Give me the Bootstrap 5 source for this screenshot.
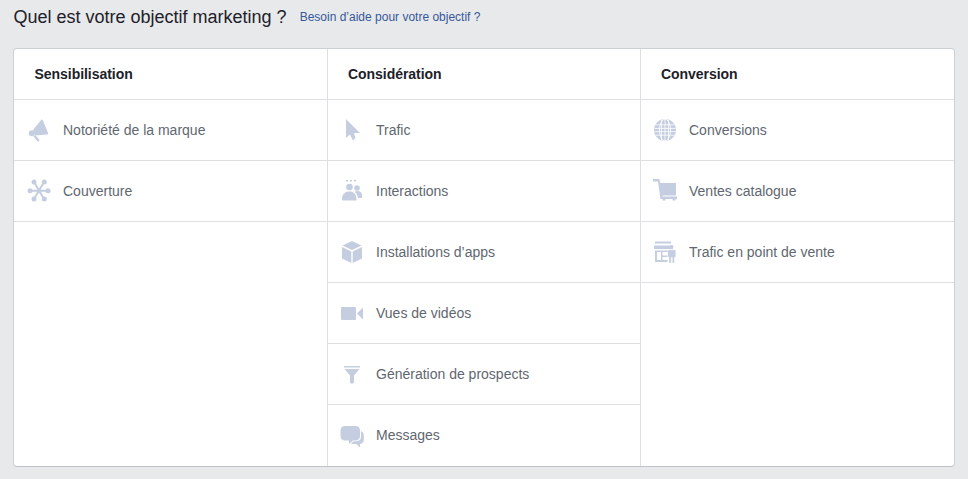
<!DOCTYPE html>
<html lang="fr">
<head>
<meta charset="utf-8">
<title>Objectif marketing</title>
<link href="https://cdn.jsdelivr.net/npm/bootstrap@5.3.0/dist/css/bootstrap.min.css" rel="stylesheet">
<style>
html,body{height:479px;overflow:hidden}
body{background:#e8e9eb;font-family:"Liberation Sans",Arial,sans-serif;color:#1d2129}
.page-wrap{padding:0 13px}
.title-row{height:48px;padding-bottom:14px}
.title-text{font-size:18px;line-height:34px;margin:0;font-weight:400;padding-left:.5px}
.help-link{font-size:12px;color:#365899;text-decoration:none;margin-left:13px}
.obj-box{width:942px;height:419px;background:#fff;border:1px solid #ccd0d5;border-bottom-color:#bec2c9;border-radius:4px;overflow:hidden}
.obj-col{width:314px;flex:none;border-right:1px solid #dddfe2}
.obj-col:nth-child(2){width:313px}
.obj-col:last-child{border-right:0;width:313px}
.obj-head{height:51px;border-bottom:1px solid #dddfe2;padding-left:20px;font-size:14px;font-weight:700;line-height:50px;color:#1d2129;letter-spacing:-.04px}
.obj-col:first-child .obj-head{padding-left:20.5px}
.obj-row{height:61px;border-bottom:1px solid #dddfe2;font-size:14px;color:#616770}
.obj-row.end{border-bottom:0}
.obj-ico{width:48px;flex:none;display:flex;justify-content:center}
.obj-col:first-child .obj-ico{width:49px;padding-right:1px}
.obj-ico svg{display:block;fill:#c5cde0;overflow:visible}
</style>
</head>
<body>
<div class="page-wrap">
  <div class="title-row d-flex align-items-center">
    <h1 class="title-text">Quel est votre objectif marketing ?</h1>
    <a class="help-link" href="#">Besoin d’aide pour votre objectif ?</a>
  </div>
  <div class="obj-box d-flex">
    <div class="obj-col">
      <div class="obj-head">Sensibilisation</div>
      <div class="obj-row d-flex align-items-center">
        <span class="obj-ico"><svg width="24" height="24" viewBox="0 0 24 24"><path d="M15.500 1.500c.7 0 1.100.4 1.400 1l5.300 12.800c.3.800-.2 1.100-1 1.100L9 17.500 7 12z"/><circle cx="5.800" cy="15.200" r="3"/><path d="M9 18.500l3.200 3.800" stroke="#c5cde0" stroke-width="2.500" stroke-linecap="round" fill="none"/></svg></span>
        <span>Notoriété de la marque</span>
      </div>
      <div class="obj-row d-flex align-items-center">
        <span class="obj-ico"><svg width="24" height="24" viewBox="0 0 24 24"><path d="M8 3 18 20M18 3 8 20M4 11.700h18" stroke="#c5cde0" stroke-width="2" fill="none"/><circle cx="13" cy="11.700" r="2.200"/><circle cx="8" cy="3" r="2.500"/><circle cx="18.300" cy="3" r="2.500"/><circle cx="8" cy="20" r="2.500"/><circle cx="18.300" cy="20" r="2.500"/><circle cx="4" cy="11.700" r="2.500"/><circle cx="22" cy="11.700" r="2.500"/></svg></span>
        <span>Couverture</span>
      </div>
    </div>
    <div class="obj-col">
      <div class="obj-head">Considération</div>
      <div class="obj-row d-flex align-items-center">
        <span class="obj-ico"><svg width="24" height="24" viewBox="0 0 24 24"><path d="M6 1 20 15h-6l1.500 5-2.700 2.500L10 16.500 6 20z"/></svg></span>
        <span>Trafic</span>
      </div>
      <div class="obj-row d-flex align-items-center">
        <span class="obj-ico"><svg width="24" height="24" viewBox="0 0 24 24"><rect x="6" y="1" width="2" height="1.500"/><rect x="10" y="1" width="2" height="1.500"/><rect x="14" y="1" width="2" height="1.500"/><circle cx="9.500" cy="8" r="3.300"/><circle cx="17" cy="9" r="2.800"/><path d="M2 20c0-5 3-7.500 7.500-7.500S16.500 15 16.500 21.500H3.500C2.500 21.500 2 21 2 20z"/><path d="M14.500 12.800c1-.5 1.800-.7 3-.7 3.200 0 4.800 2.500 4.800 5.300 0 1-.4 1.600-1.300 1.600h-3c-.4-2.600-1.400-4.800-3.500-6.200z"/></svg></span>
        <span>Interactions</span>
      </div>
      <div class="obj-row d-flex align-items-center">
        <span class="obj-ico"><svg width="24" height="24" viewBox="0 0 24 24"><path d="M12 1 21.500 5.500 12 10 2.500 5.500z"/><path d="M2 7 11.300 11.500v11.500L2 18.500z"/><path d="M22 7 12.700 11.500v11.500L22 18.500z"/></svg></span>
        <span>Installations d’apps</span>
      </div>
      <div class="obj-row d-flex align-items-center">
        <span class="obj-ico"><svg width="24" height="24" viewBox="0 0 24 24"><rect x="1" y="6" width="15" height="13" rx="1"/><path d="M17 12.500 23 6.500V18.500z"/></svg></span>
        <span>Vues de vidéos</span>
      </div>
      <div class="obj-row d-flex align-items-center">
        <span class="obj-ico"><svg width="24" height="24" viewBox="0 0 24 24"><rect x="4" y="4" width="16" height="1.500"/><path d="M4.500 7h15l-5.500 6.500v6.500c0 .8-.7 1.500-1.500 1.500h-1c-.8 0-1.500-.7-1.500-1.500v-6.500z"/></svg></span>
        <span>Génération de prospects</span>
      </div>
      <div class="obj-row end d-flex align-items-center">
        <span class="obj-ico"><svg width="24" height="24" viewBox="0 0 24 24"><path d="M5 2h10.500c2.800 0 4.500 1.800 4.500 4.500v5.500c0 2.800-1.800 4.500-4.500 4.500H13l-4 3.500v-3.500H5C2.200 16.500.5 14.800.5 12V6.500C.5 3.800 2.200 2 5 2z"/><path d="M21 7c1.800.8 2.800 2.500 2.800 4.500v4.300c0 2.400-1.500 4-3.800 4.200v3.500l-3.700-3.500h-3.500c-.8 0-1.500-.2-2-.5l3-2.300h2.700c3 0 4.500-1.800 4.500-4.700z"/></svg></span>
        <span>Messages</span>
      </div>
    </div>
    <div class="obj-col">
      <div class="obj-head">Conversion</div>
      <div class="obj-row d-flex align-items-center">
        <span class="obj-ico"><svg width="24" height="24" viewBox="0 0 24 24"><circle cx="12" cy="12" r="11"/><g fill="none" stroke="#fff" stroke-width=".8"><ellipse cx="12" cy="12" rx="5.500" ry="11"/><path d="M12 1v22M2.500 6.800h19M1.200 10.400h21.600M1.200 13.600h21.600M2.500 17.200h19M8.500 1.500v21M15.500 1.500v21"/></g></svg></span>
        <span>Conversions</span>
      </div>
      <div class="obj-row d-flex align-items-center">
        <span class="obj-ico"><svg width="24" height="24" viewBox="0 0 24 24"><path d="M0 0h6.500l.6 4H23v12.500H9.500l.3 1H24v2.500h-1.500v1.500h-3V20H12.500v1.500h-3V20H7.500L5 2.500H0z"/></svg></span>
        <span>Ventes catalogue</span>
      </div>
      <div class="obj-row d-flex align-items-center">
        <span class="obj-ico"><svg width="24" height="24" viewBox="0 0 24 24"><rect x="2" y="1.500" width="16" height="2"/><rect x="1" y="5.500" width="19" height="3.500"/><path fill-rule="evenodd" d="M2 10.500h13.500V12H9.500v3.500H14.500V17H9.500v3H14.500v2H2zM4 12v8H8V12z"/><circle cx="18.500" cy="7" r="2"/><path d="M16.500 9.800h4.500c1 0 1.800.7 1.800 1.800V17H21.500v6h-2.200v-5.500h-1V23H16v-6h-1.300v-5.500c0-1 .8-1.700 1.800-1.700z" stroke="#fff" stroke-width=".4"/></svg></span>
        <span>Trafic en point de vente</span>
      </div>
    </div>
  </div>
</div>
<script src="https://cdn.jsdelivr.net/npm/bootstrap@5.3.0/dist/js/bootstrap.bundle.min.js"></script>
</body>
</html>
